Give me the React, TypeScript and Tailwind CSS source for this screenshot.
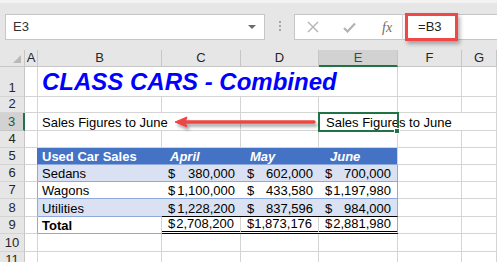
import type { ReactNode } from "react";

const GRID = "border-r border-b border-r-[#d4d4d4] border-b-[#d4d4d4]";

const rows = [
  { name: "Sedans", fill: true, vals: ["380,000", "602,000", "700,000"] },
  { name: "Wagons", fill: false, vals: ["1,100,000", "433,580", "1,197,980"] },
  { name: "Utilities", fill: true, vals: ["1,228,200", "837,596", "984,000"] },
];

const totals = ["2,708,200", "1,873,176", "2,881,980"];

function ColHead({ label, selected }: { label: string; selected?: boolean }) {
  return (
    <div
      className={
        selected
          ? "flex items-center justify-center border-r border-b-2 border-r-[#c6c6c6] border-b-[#217346] bg-[#d2d2d2] text-[#1e5c3a]"
          : "flex items-center justify-center border-r border-b border-r-[#c6c6c6] border-b-[#c6c6c6] bg-[#e6e6e6] text-[#262626]"
      }
    >
      {label}
    </div>
  );
}

function RowHead({ n, selected }: { n: number; selected?: boolean }) {
  return (
    <div
      className={
        selected
          ? "flex items-end justify-center border-r-2 border-b border-r-[#217346] border-b-[#c6c6c6] bg-[#d2d2d2] leading-[16px] text-[#1e5c3a]"
          : "flex items-end justify-center border-r border-b border-r-[#c6c6c6] border-b-[#d4d4d4] bg-[#e6e6e6] leading-[16px] text-[#262626]"
      }
    >
      {n}
    </div>
  );
}

function Cell({ className = GRID, children }: { className?: string; children?: ReactNode }) {
  return (
    <div className={`flex items-end overflow-visible whitespace-nowrap leading-[15px] ${className}`}>
      {children}
    </div>
  );
}

function Money({ value, className }: { value: string; className: string }) {
  return (
    <Cell className={`justify-between pl-[6px] pr-[6px] ${className}`}>
      <span>$</span>
      <span>{value}</span>
    </Cell>
  );
}

function EmptyRow({ n }: { n: number }) {
  return (
    <>
      <RowHead n={n} />
      <Cell />
      <Cell />
      <Cell />
      <Cell />
      <Cell />
      <Cell />
      <Cell />
    </>
  );
}

function FormulaBar() {
  return (
    <div className="flex h-[47px] items-start bg-[#e6e6e6] pt-[11px]">
      <div className="ml-[5px] flex h-[26px] w-[260px] items-center justify-between border border-[#c6c6c6] bg-white pl-[7px] pr-[8px] text-[#333]">
        <span>E3</span>
        <svg width="8" height="4" viewBox="0 0 8 4">
          <path d="M0 0h8L4 4z" fill="#6b6b6b" />
        </svg>
      </div>
      <div className="ml-[13px] mt-[7px] flex w-[3px] flex-col items-center gap-[2px]">
        <span className="h-[2px] w-[2px] bg-[#a6a6a6]" />
        <span className="h-[2px] w-[2px] bg-[#a6a6a6]" />
        <span className="h-[2px] w-[2px] bg-[#a6a6a6]" />
      </div>
      <div className="ml-[13px] flex h-[26px] flex-1 items-center border border-r-0 border-[#c6c6c6] bg-white">
        <svg className="ml-[12px]" width="12" height="12" viewBox="0 0 12 12">
          <path d="M1 1l10 10M11 1L1 11" stroke="#b3b3b3" strokeWidth="1.4" />
        </svg>
        <svg className="ml-[24px]" width="13" height="11" viewBox="0 0 13 11">
          <path d="M1 6l3.5 3.5L12 1.5" stroke="#b3b3b3" strokeWidth="2.2" fill="none" />
        </svg>
        <span className="ml-[26px] font-['Liberation_Serif',serif] text-[14px] italic text-[#6e6e6e]">fx</span>
        <span className="ml-[10px] h-[26px] w-px bg-[#d6d6d6]" />
        <span className="ml-[15px] text-[#222]">=B3</span>
      </div>
    </div>
  );
}

function Sheet() {
  return (
    <div className="grid grid-cols-[25px_13px_124px_79px_78px_79px_64px_1fr] grid-rows-[17px_30px_16px_18px_17px_17px_17px_17px_18px_17px_18px_17px]">
      {/* column headers */}
      <div className="relative border-r border-b border-r-[#c6c6c6] border-b-[#c6c6c6] bg-[#e6e6e6]">
        <svg className="absolute bottom-[3px] right-[3px]" width="8" height="8" viewBox="0 0 8 8">
          <path d="M8 0v8H0z" fill="#b9b9b9" />
        </svg>
      </div>
      <ColHead label="A" />
      <ColHead label="B" />
      <ColHead label="C" />
      <ColHead label="D" />
      <ColHead label="E" selected />
      <ColHead label="F" />
      <ColHead label="G" />

      {/* row 1 */}
      <RowHead n={1} />
      <Cell />
      <Cell className={`col-span-4 pl-[4px] text-[24px] leading-[28px] font-bold italic text-[#0000ff] ${GRID}`}>
        CLASS CARS - Combined
      </Cell>
      <Cell />
      <Cell />

      <EmptyRow n={2} />

      {/* row 3 */}
      <RowHead n={3} selected />
      <Cell />
      <Cell className={`col-span-2 pl-[4px] ${GRID}`}>Sales Figures to June</Cell>
      <Cell />
      <div className={`relative flex items-end whitespace-nowrap pl-[7px] leading-[15px] ${GRID}`}>
        Sales Figures to June
        <div className="absolute -left-px -top-px h-[20px] w-[81px] border-2 border-[#217346]" />
        <div className="absolute left-[75px] top-[15px] h-[6px] w-[6px] border border-white bg-[#217346]" />
      </div>
      <Cell className="border-b border-b-[#d4d4d4]" />
      <Cell />

      <EmptyRow n={4} />

      {/* row 5 */}
      <RowHead n={5} />
      <Cell className="border-r border-b border-r-[#4472c4] border-b-[#d4d4d4]" />
      <Cell className="border-b border-b-[#8ea9db] bg-[#4472c4] pl-[4px] font-bold text-white">Used Car Sales</Cell>
      <Cell className="border-b border-b-[#8ea9db] bg-[#4472c4] pl-[8px] font-bold italic text-white">April</Cell>
      <Cell className="border-b border-b-[#8ea9db] bg-[#4472c4] pl-[9px] font-bold italic text-white">May</Cell>
      <Cell className="border-r border-b border-r-[#d4d4d4] border-b-[#8ea9db] bg-[#4472c4] pl-[11px] font-bold italic text-white">June</Cell>
      <Cell />
      <Cell />

      {/* rows 6-8 */}
      {rows.map((r, i) => {
        const last = i === rows.length - 1;
        const bg = r.fill ? "bg-[#d9e1f2]" : "bg-white";
        const numBottom = last ? "border-b-black" : "border-b-[#8ea9db]";
        return (
          <div key={r.name} className="contents">
            <RowHead n={6 + i} />
            <Cell className="border-r border-b border-r-[#8ea9db] border-b-[#d4d4d4]" />
            <Cell className={`border-b border-b-[#8ea9db] pl-[4px] ${bg}`}>{r.name}</Cell>
            <Money value={r.vals[0]} className={`border-b ${numBottom} ${bg}`} />
            <Money value={r.vals[1]} className={`border-b ${numBottom} ${bg}`} />
            <Money value={r.vals[2]} className={`border-r border-b border-r-[#8ea9db] ${numBottom} ${bg}`} />
            <Cell />
            <Cell />
          </div>
        );
      })}

      {/* row 9 */}
      <RowHead n={9} />
      <Cell className="border-r border-b border-r-[#8ea9db] border-b-[#d4d4d4]" />
      <Cell className="border-r border-b border-r-[#d4d4d4] border-b-[#8ea9db] pl-[4px] font-bold">Total</Cell>
      <Money value={totals[0]} className="border-r border-b-[3px] border-double border-r-[#d4d4d4] border-b-black" />
      <Money value={totals[1]} className="border-r border-b-[3px] border-double border-r-[#d4d4d4] border-b-black" />
      <Money value={totals[2]} className="border-r border-b-[3px] border-double border-r-[#8ea9db] border-b-black" />
      <Cell />
      <Cell />

      <EmptyRow n={10} />
      <EmptyRow n={11} />
    </div>
  );
}

function Arrow() {
  return (
    <svg className="absolute left-[168px] top-[112px]" width="156" height="24" viewBox="0 0 156 24">
      <defs>
        <filter id="arrowShadow" x="-10%" y="-50%" width="120%" height="200%">
          <feDropShadow dx="2" dy="3" stdDeviation="1.5" floodColor="#000" floodOpacity="0.35" />
        </filter>
      </defs>
      <g filter="url(#arrowShadow)">
        <path d="M16 10H146" stroke="#ee4444" strokeWidth="3.5" strokeLinecap="round" />
        <path d="M7 10L19 5L17 10L19 15Z" fill="#ee4444" stroke="#ee4444" strokeWidth="1" strokeLinejoin="round" />
      </g>
    </svg>
  );
}

export default function App() {
  return (
    <div className="relative h-[262px] w-[497px] overflow-hidden bg-white font-['Liberation_Sans',Arial,sans-serif] text-[13px] text-black">
      <div className="h-[3px] bg-[#f3f3f3]" />
      <FormulaBar />
      <Sheet />
      <Arrow />
      <div className="absolute left-[405px] top-[13px] h-[28px] w-[53px] border-[3px] border-[#f04848] shadow-[2px_3px_4px_rgba(0,0,0,0.3)]" />
    </div>
  );
}
